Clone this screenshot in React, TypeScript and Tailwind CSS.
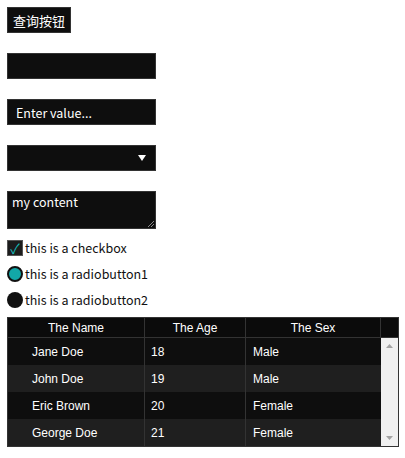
import type { JSX } from 'react';

const rows = [
  { name: 'Jane Doe', age: 18, sex: 'Male' },
  { name: 'John Doe', age: 19, sex: 'Male' },
  { name: 'Eric Brown', age: 20, sex: 'Female' },
  { name: 'George Doe', age: 21, sex: 'Female' },
];

const ui = "font-['Noto_Sans_CJK_SC','Noto_Sans',sans-serif]";

export default function App(): JSX.Element {
  return (
    <div className={`min-h-[458px] bg-white p-[7px] text-[12.5px] ${ui}`}>
      <div className="flex flex-col items-start">
        <button
          type="button"
          className="h-[26px] w-[64px] border border-[#333] bg-[#0e0e0e] text-[13px] leading-none text-white"
        >
          查询按钮
        </button>

        <input
          className="mt-[20px] h-[26px] w-[149px] border border-[#333] bg-[#0e0e0e] px-2 text-white outline-none"
          readOnly
        />

        <input
          className="mt-[20px] h-[26px] w-[149px] border border-[#333] bg-[#0e0e0e] px-2 text-white outline-none placeholder:text-white"
          placeholder="Enter value..."
          readOnly
        />

        <div className="mt-[20px] flex h-[26px] w-[149px] items-center justify-end border border-[#333] bg-[#0e0e0e] pr-[9px]">
          <svg width="8" height="6" viewBox="0 0 8 6">
            <polygon points="0,0 8,0 4,6" fill="#fff" />
          </svg>
        </div>

        <div className="relative mt-[20px] h-[38px] w-[149px] border border-[#333] bg-[#0e0e0e] px-[4px] pt-[2px] leading-[16px] text-white">
          my content
          <svg className="absolute bottom-[1px] right-[1px]" width="6" height="6" viewBox="0 0 6 6">
            <path d="M6 0 L0 6 M6 3 L3 6" stroke="#888" strokeWidth="1" />
          </svg>
        </div>

        <label className="mt-[11px] flex h-[16px] items-center text-[#111]">
          <span className="flex h-[16px] w-[16px] items-center justify-center border border-[#555] bg-[#1c1c1c] text-[14px] leading-none text-[#14b8b8]">
            ✓
          </span>
          <span className="ml-[2px]">this is a checkbox</span>
        </label>

        <label className="mt-[10px] flex h-[16px] items-center text-[#111]">
          <span className="h-[16px] w-[16px] rounded-full border-[2px] border-[#111] bg-[#12a8a8]" />
          <span className="ml-[2px]">this is a radiobutton1</span>
        </label>

        <label className="mt-[10px] flex h-[16px] items-center text-[#111]">
          <span className="h-[16px] w-[16px] rounded-full bg-[#111]" />
          <span className="ml-[2px]">this is a radiobutton2</span>
        </label>

        <div className="mt-[9px] w-[392px] border border-[#333] bg-[#0e0e0e] font-['Liberation_Sans',Arial,sans-serif] text-[12px] text-white">
          <div className="flex h-[20px] border-b border-[#333] bg-[#0b0b0b]">
            <div className="flex w-[137px] items-center justify-center border-r border-[#333]">The Name</div>
            <div className="flex w-[101px] items-center justify-center border-r border-[#333]">The Age</div>
            <div className="flex w-[135px] items-center justify-center border-r border-[#333]">The Sex</div>
            <div className="flex-1" />
          </div>
          <div className="flex">
            <div className="w-[373px]">
              {rows.map((r, i) => (
                <div
                  key={r.name}
                  className={`flex h-[27px] items-center ${i % 2 ? 'bg-[#1f1f1f]' : 'bg-[#0e0e0e]'}`}
                >
                  <div className="flex h-full w-[137px] items-center border-r border-[#333] pl-[24px]">{r.name}</div>
                  <div className="flex h-full w-[101px] items-center border-r border-[#333] pl-[6px]">{r.age}</div>
                  <div className="flex h-full flex-1 items-center pl-[7px]">{r.sex}</div>
                </div>
              ))}
            </div>
            <div className="flex w-[17px] flex-col items-center justify-between bg-[#f0f0f0] py-[6px]">
              <svg width="7" height="4" viewBox="0 0 7 4">
                <polygon points="0,4 7,4 3.5,0" fill="#a3a3a3" />
              </svg>
              <svg width="7" height="4" viewBox="0 0 7 4">
                <polygon points="0,0 7,0 3.5,4" fill="#a3a3a3" />
              </svg>
            </div>
          </div>
        </div>
      </div>
    </div>
  );
}
